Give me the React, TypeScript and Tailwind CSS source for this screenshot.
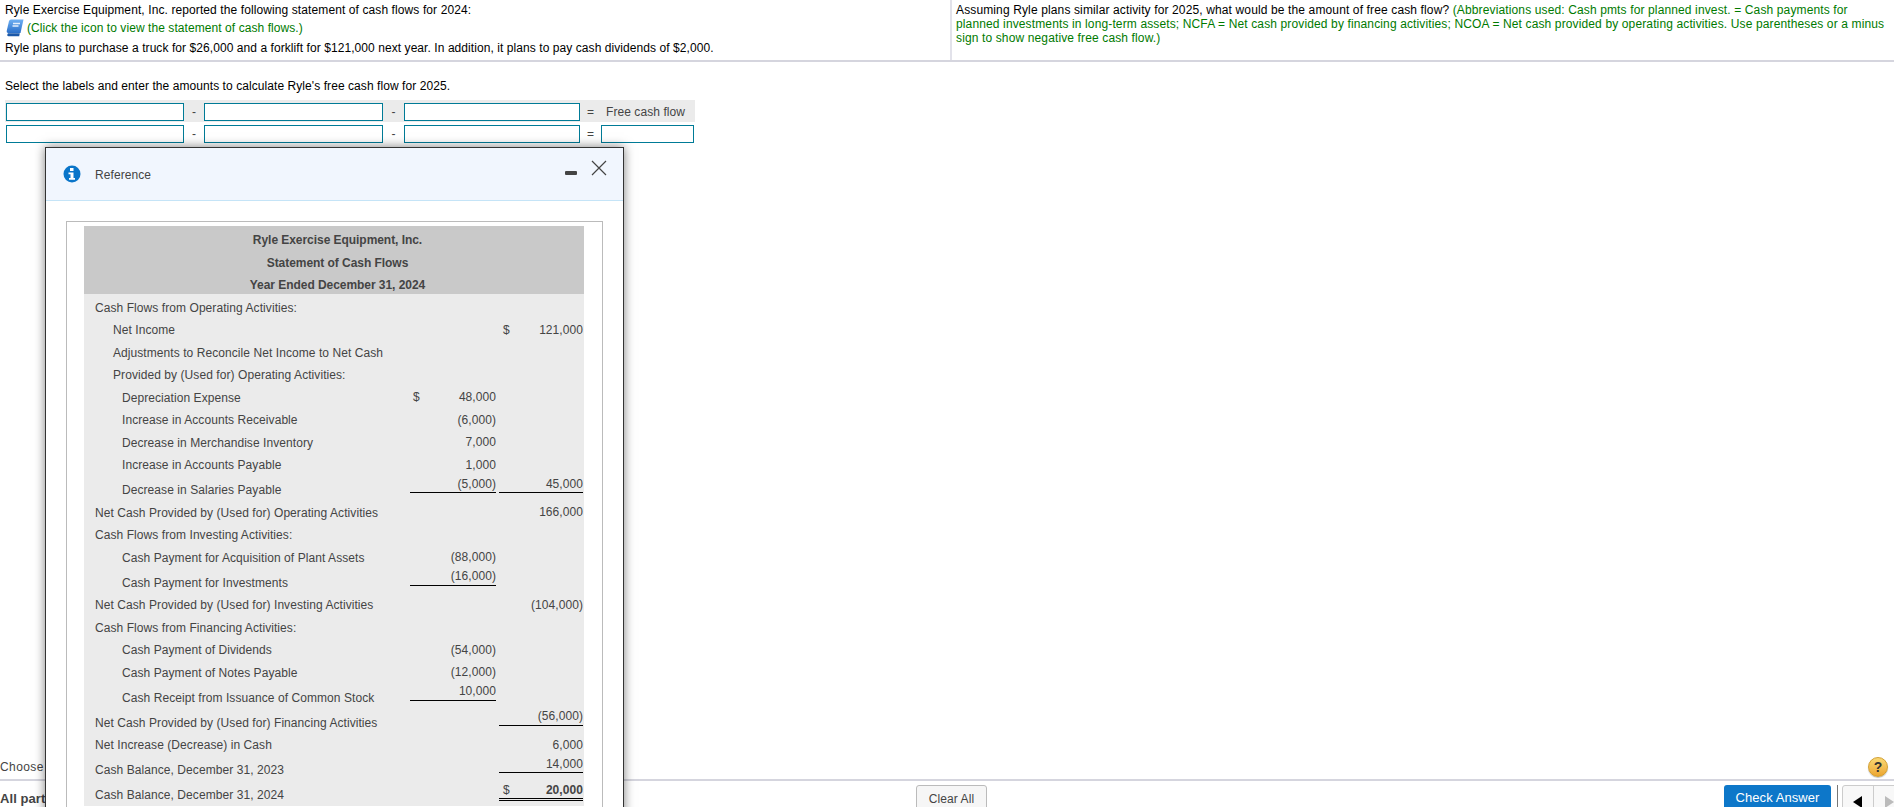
const font = "font-['Liberation_Sans',Arial,sans-serif]";

type Row = {
  label: string;
  indent?: 0 | 1 | 2;
  col1?: string;
  col2?: string;
  sign1?: boolean;
  sign2?: boolean;
  line1?: boolean;
  line2?: boolean;
  double?: boolean;
  bold?: boolean;
};

const rows: Row[] = [
  { label: "Cash Flows from Operating Activities:" },
  { label: "Net Income", indent: 1, col2: "121,000", sign2: true },
  { label: "Adjustments to Reconcile Net Income to Net Cash", indent: 1 },
  { label: "Provided by (Used for) Operating Activities:", indent: 1 },
  { label: "Depreciation Expense", indent: 2, col1: "48,000", sign1: true },
  { label: "Increase in Accounts Receivable", indent: 2, col1: "(6,000)" },
  { label: "Decrease in Merchandise Inventory", indent: 2, col1: "7,000" },
  { label: "Increase in Accounts Payable", indent: 2, col1: "1,000" },
  { label: "Decrease in Salaries Payable", indent: 2, col1: "(5,000)", col2: "45,000", line1: true, line2: true },
  { label: "Net Cash Provided by (Used for) Operating Activities", col2: "166,000" },
  { label: "Cash Flows from Investing Activities:" },
  { label: "Cash Payment for Acquisition of Plant Assets", indent: 2, col1: "(88,000)" },
  { label: "Cash Payment for Investments", indent: 2, col1: "(16,000)", line1: true },
  { label: "Net Cash Provided by (Used for) Investing Activities", col2: "(104,000)" },
  { label: "Cash Flows from Financing Activities:" },
  { label: "Cash Payment of Dividends", indent: 2, col1: "(54,000)" },
  { label: "Cash Payment of Notes Payable", indent: 2, col1: "(12,000)" },
  { label: "Cash Receipt from Issuance of Common Stock", indent: 2, col1: "10,000", line1: true },
  { label: "Net Cash Provided by (Used for) Financing Activities", col2: "(56,000)", line2: true },
  { label: "Net Increase (Decrease) in Cash", col2: "6,000" },
  { label: "Cash Balance, December 31, 2023", col2: "14,000", line2: true },
  { label: "Cash Balance, December 31, 2024", col2: "20,000", sign2: true, double: true, bold: true },
];

function StatementRow({ row }: { row: Row }) {
  const ruled = row.line1 || row.line2 || row.double;
  return (
    <div className={`flex ${ruled ? "h-[25px]" : "h-[22.5px]"}`}>
      <div
        className={`flex-1 self-end leading-[22px] ${
          row.indent === 2 ? "pl-[38px]" : row.indent === 1 ? "pl-[29px]" : "pl-[11px]"
        }`}
      >
        {row.label}
      </div>
      {/* ruled cells stop short of the row bottom, the line sits above the label's baseline */}
      <div
        className={`w-[86px] mr-[3px] flex justify-between items-center self-start pl-[3px] ${
          row.line1 ? "h-[17px] pb-[1px] border-b border-black" : "h-[22.5px]"
        }`}
      >
        <span>{row.sign1 ? "$" : ""}</span>
        <span>{row.col1}</span>
      </div>
      <div
        className={`w-[84px] mr-[1px] flex justify-between items-center self-start ${
          row.double
            ? "h-[20px] border-b-[3px] border-double border-black pl-[4px]"
            : row.line2
              ? "h-[17px] pb-[1px] border-b border-black"
              : "h-[22.5px] pl-[4px]"
        }`}
      >
        <span>{row.sign2 ? "$" : ""}</span>
        <span className={row.bold ? "font-bold" : ""}>{row.col2}</span>
      </div>
    </div>
  );
}

function Field({ w }: { w: string }) {
  return <div className={`h-[18px] bg-white border border-[#007b97] ${w}`} />;
}

function FormulaRow({ grey }: { grey?: boolean }) {
  return (
    <div className={`flex h-[22px] w-[690px] pl-[1px] ${grey ? "items-end pb-[1px] bg-[#ebebeb]" : "items-center"}`}>
      <Field w="w-[178px]" />
      <span className="w-[20px] text-center">-</span>
      <Field w="w-[179px]" />
      <span className="w-[21px] text-center">-</span>
      <Field w="w-[176px]" />
      <span className="w-[21px] text-center">=</span>
      {grey ? <span className="pl-[5px]">Free cash flow</span> : <Field w="w-[93px]" />}
    </div>
  );
}

export default function App() {
  return (
    <div className={`${font} relative h-[807px] w-[1894px] overflow-hidden bg-white text-[12px] tracking-[0.07px] text-[#444]`}>
      <div className="flex h-[62px] border-b-2 border-[#d5d5de] text-black">
        <div className="w-[950px] pl-[5px]">
          <p className="leading-[14px] pt-[3px] tracking-[0.1px]">Ryle Exercise Equipment, Inc. reported the following statement of cash flows for 2024:</p>
          <p className="flex items-center h-[22px] text-[#007a00]">
            <svg width="18" height="18" viewBox="0 0 18 18" className="mr-[3px] ml-[1px]">
              <defs>
                <linearGradient id="book" x1="0" y1="0" x2="0" y2="1">
                  <stop offset="0" stopColor="#6fb0f2" />
                  <stop offset="1" stopColor="#2a6fc9" />
                </linearGradient>
              </defs>
              <path d="M5 .5h12.500l-3 13.500H2.500Q.3 14 .8 11.500L3 2Q3.500.7 5 .5z" fill="url(#book)" />
              <path d="M2 14.200h11.800l-.6 3H2.500Q.2 16.800 2 14.200z" fill="#1b58a8" />
              <path d="M7 4.500h7M6.500 7h6" stroke="#e4effc" strokeWidth="1.300" />
            </svg>
            (Click the icon to view the statement of cash flows.)
          </p>
          <p className="leading-[16px] pt-[1px]">Ryle plans to purchase a truck for $26,000 and a forklift for $121,000 next year. In addition, it plans to pay cash dividends of $2,000.</p>
        </div>
        <div className="flex-1 border-l-2 border-[#e2e2ea] pl-[4px] pt-[3px] leading-[14px] tracking-[0.13px]">
          Assuming Ryle plans similar activity for 2025, what would be the amount of free cash flow?{" "}
          <span className="text-[#007a00]">
            (Abbreviations used: Cash pmts for planned invest. = Cash payments for
            <br />
            planned investments in long-term assets; NCFA = Net cash provided by financing activities; NCOA = Net cash provided by operating activities. Use parentheses or a minus
            <br />
            sign to show negative free cash flow.)
          </span>
        </div>
      </div>

      <div className="pl-[5px] pt-[16px]">
        <p className="text-black leading-[16px] mb-[6px]">Select the labels and enter the amounts to calculate Ryle&apos;s free cash flow for 2025.</p>
        <div className="flex flex-col gap-[1px]">
          <FormulaRow grey />
          <FormulaRow />
        </div>
      </div>

      <div className="absolute left-0 right-0 top-[766px] h-[41px]">
        <div className="-mt-[6px] h-[14px] leading-[14px] tracking-[0.4px]">Choose</div>
        <div className="absolute left-0 right-0 top-[13px] border-t-2 border-[#d5d5de]" />
        <div className="absolute left-0 top-[25px] text-[13px] font-bold leading-[16px]">All parts</div>
        <button className="absolute left-[916px] top-[19px] h-[30px] w-[71px] rounded-[3px] border border-[#bbb] bg-[#f6f6f6] pb-[3px]">
          Clear All
        </button>
        <button className="absolute left-[1724px] top-[19px] h-[30px] w-[107px] rounded-[3px] bg-[#0d77c9] pb-[4px] text-[13px] text-white">
          Check Answer
        </button>
        <div className="absolute left-[1837px] top-[19px] h-[30px] w-px bg-[#777]" />
        <div className="absolute left-[1842px] top-[19px] h-[30px] w-[60px] rounded-[3px] border border-[#ccc] bg-[#f8f8f8] flex">
          <div className="w-[31px] border-r border-[#ccc] flex justify-center pt-[10px]">
            <svg width="10" height="12" viewBox="0 0 10 12"><path d="M9 0v12L0 6z" fill="#000" /></svg>
          </div>
          <div className="flex-1 pl-[10px] pt-[10px]">
            <svg width="10" height="12" viewBox="0 0 10 12"><path d="M1 0v12l9-6z" fill="#bbb" /></svg>
          </div>
        </div>
        <div className="absolute left-[1868px] -top-[9px] h-[20px] w-[20px] rounded-full border border-[#d3a032] bg-linear-to-b from-[#f9d873] to-[#eca62e] text-center text-[14px] font-bold leading-[18px] text-[#333] shadow-[0_1px_1px_rgba(0,0,0,0.25)]">
          ?
        </div>
      </div>

      {/* reference popup */}
      <div className="absolute left-[45px] top-[147px] w-[579px] h-[700px] border border-[#333] bg-white shadow-[0_0_10px_rgba(0,0,0,0.5)]">
        <div className="relative flex h-[53px] items-center border-b border-[#c5e4f7] bg-[#f1f6fe] pl-[17px]">
          <svg width="18" height="18" viewBox="0 0 18 18" className="mr-[14px]">
            <circle cx="9" cy="9" r="8.500" fill="#0a75c9" />
            <rect x="7" y="3" width="3.500" height="3" fill="#fff" />
            <path d="M5.500 7.500h5V13H12v1.800H6V13h1.500V9.200h-2z" fill="#fff" />
          </svg>
          <span className="pt-[1px]">Reference</span>
          <div className="absolute left-[519px] top-[23px] h-[4px] w-[12px] rounded-[1px] bg-[#444]" />
          <svg width="16" height="16" viewBox="0 0 16 16" className="absolute left-[545px] top-[12px]">
            <path d="M1 1l14 14M15 1L1 15" stroke="#444" strokeWidth="1.200" />
          </svg>
        </div>
        <div className="mx-[20px] mt-[20px] h-[700px] border border-[#bbb] pl-[17px] pr-[18px] pt-[4px]">
          <div className="bg-[#c9c9c9] h-[68px] pt-[3px] pl-[7px] text-center font-bold leading-[22.500px] tracking-[-0.05px]">
            <div>Ryle Exercise Equipment, Inc.</div>
            <div>Statement of Cash Flows</div>
            <div>Year Ended December 31, 2024</div>
          </div>
          <div className="bg-[#ebebeb] pt-[2px]">
            {rows.map((row) => (
              <StatementRow key={row.label} row={row} />
            ))}
          </div>
        </div>
      </div>
    </div>
  );
}
